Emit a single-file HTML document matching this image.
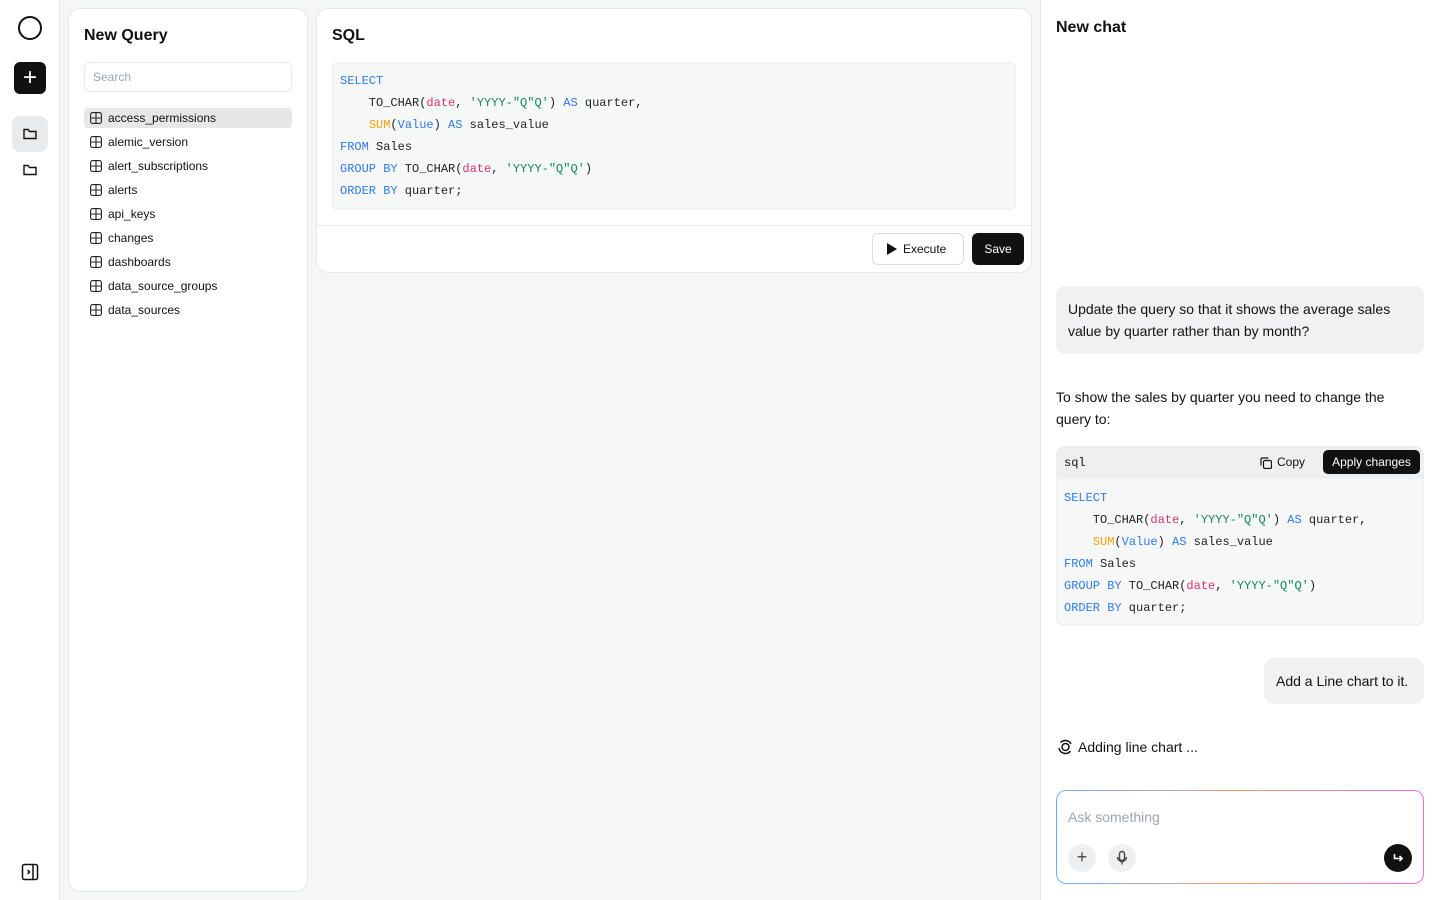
<!DOCTYPE html>
<html><head><style>
*{box-sizing:border-box;margin:0;padding:0}
body{width:1440px;height:900px;overflow:hidden;font-family:"Liberation Sans",sans-serif;background:#f5f6f6;position:relative;color:#111}
.abs{position:absolute}
.mono{font-family:"Liberation Mono",monospace;font-size:12px}
.k{color:#2f7ae5}.s{color:#16845b}.r{color:#d6336c}.o{color:#f59f0b}
.t{height:24px;position:relative;padding-left:18px}
.t svg{position:absolute;left:0;top:6px}
</style></head><body>
<div class="abs" style="left:0;top:0;width:60px;height:900px;background:#fff;border-right:1px solid #e5e7eb"></div>
<div class="abs" style="left:18px;top:16px;width:24px;height:24px;border:2px solid #111;border-radius:50%"></div>
<div class="abs" style="left:14px;top:62px;width:32px;height:32px;background:#111;border-radius:6px;color:#fff;font-size:24px;line-height:31px;text-align:center">+</div>
<div class="abs" style="left:12px;top:116px;width:36px;height:36px;background:#e9eaec;border-radius:8px"></div>
<svg class="abs" style="left:22px;top:126px" width="16" height="16" viewBox="0 0 16 16" fill="none" stroke="#111" stroke-width="1.4"><path d="M2 4v8.5h12V5.5H7.5L6 3.5H2z"/></svg>
<svg class="abs" style="left:22px;top:162px" width="16" height="16" viewBox="0 0 16 16" fill="none" stroke="#111" stroke-width="1.4"><path d="M2 4v8.5h12V5.5H7.5L6 3.5H2z"/></svg>
<svg class="abs" style="left:21px;top:863px" width="18" height="18" viewBox="0 0 18 18" fill="none" stroke="#111" stroke-width="1.5"><rect x="1.5" y="1.5" width="15" height="15" rx="2"/><path d="M12 2v14M6.5 7l2 2-2 2"/></svg>

<div class="abs" style="left:68px;top:8px;width:240px;height:884px;background:#fff;border:1px solid #e5e7eb;border-radius:12px"></div>
<div class="abs" style="left:84px;top:27px;font-size:16px;font-weight:bold">New Query</div>
<div class="abs" style="left:84px;top:62px;width:208px;height:30px;border:1px solid #e5e7eb;border-radius:6px;font-size:12px;color:#9ca3af;padding:7px 8px">Search</div>
<div class="abs" style="left:84px;top:108px;width:208px;height:20px;background:#e6e7e9;border-radius:4px"></div>
<div class="abs" style="left:90px;top:106px;font-size:12px;line-height:24px">
<div class="t"><svg width="12" height="12" viewBox="0 0 12 12" fill="none" stroke="#222" stroke-width="1.1"><rect x=".6" y=".6" width="10.8" height="10.8" rx="2"/><path d="M6 1v10M1 6h10"/></svg>access_permissions</div>
<div class="t"><svg width="12" height="12" viewBox="0 0 12 12" fill="none" stroke="#222" stroke-width="1.1"><rect x=".6" y=".6" width="10.8" height="10.8" rx="2"/><path d="M6 1v10M1 6h10"/></svg>alemic_version</div>
<div class="t"><svg width="12" height="12" viewBox="0 0 12 12" fill="none" stroke="#222" stroke-width="1.1"><rect x=".6" y=".6" width="10.8" height="10.8" rx="2"/><path d="M6 1v10M1 6h10"/></svg>alert_subscriptions</div>
<div class="t"><svg width="12" height="12" viewBox="0 0 12 12" fill="none" stroke="#222" stroke-width="1.1"><rect x=".6" y=".6" width="10.8" height="10.8" rx="2"/><path d="M6 1v10M1 6h10"/></svg>alerts</div>
<div class="t"><svg width="12" height="12" viewBox="0 0 12 12" fill="none" stroke="#222" stroke-width="1.1"><rect x=".6" y=".6" width="10.8" height="10.8" rx="2"/><path d="M6 1v10M1 6h10"/></svg>api_keys</div>
<div class="t"><svg width="12" height="12" viewBox="0 0 12 12" fill="none" stroke="#222" stroke-width="1.1"><rect x=".6" y=".6" width="10.8" height="10.8" rx="2"/><path d="M6 1v10M1 6h10"/></svg>changes</div>
<div class="t"><svg width="12" height="12" viewBox="0 0 12 12" fill="none" stroke="#222" stroke-width="1.1"><rect x=".6" y=".6" width="10.8" height="10.8" rx="2"/><path d="M6 1v10M1 6h10"/></svg>dashboards</div>
<div class="t"><svg width="12" height="12" viewBox="0 0 12 12" fill="none" stroke="#222" stroke-width="1.1"><rect x=".6" y=".6" width="10.8" height="10.8" rx="2"/><path d="M6 1v10M1 6h10"/></svg>data_source_groups</div>
<div class="t"><svg width="12" height="12" viewBox="0 0 12 12" fill="none" stroke="#222" stroke-width="1.1"><rect x=".6" y=".6" width="10.8" height="10.8" rx="2"/><path d="M6 1v10M1 6h10"/></svg>data_sources</div>
</div>

<div class="abs" style="left:316px;top:8px;width:716px;height:265px;background:#fff;border:1px solid #e5e7eb;border-radius:12px"></div>
<div class="abs" style="left:332px;top:27px;font-size:16px;font-weight:bold">SQL</div>
<div class="abs mono" style="left:332px;top:62px;width:684px;height:148px;background:#f6f7f7;border:1px solid #eceeef;border-radius:6px;padding:7px 7px;line-height:22px;color:#222">
<div class="k">SELECT</div>
<div>&nbsp;&nbsp;&nbsp;&nbsp;TO_CHAR(<span class="r">date</span>, <span class="s">'YYYY-"Q"Q'</span>) <span class="k">AS</span> quarter,</div>
<div>&nbsp;&nbsp;&nbsp;&nbsp;<span class="o">SUM</span>(<span class="k">Value</span>) <span class="k">AS</span> sales_value</div>
<div><span class="k">FROM</span> Sales</div>
<div><span class="k">GROUP BY</span> TO_CHAR(<span class="r">date</span>, <span class="s">'YYYY-"Q"Q'</span>)</div>
<div><span class="k">ORDER BY</span> quarter;</div>
</div>
<div class="abs" style="left:317px;top:225px;width:714px;height:1px;background:#e5e7eb"></div>
<div class="abs" style="left:872px;top:233px;width:92px;height:32px;border:1px solid #ddd;border-radius:6px;font-size:12px;line-height:30px;padding-left:14px"><svg style="vertical-align:-2px;margin-right:6px" width="10" height="12" viewBox="0 0 10 12"><path d="M0 0L10 6L0 12z" fill="#111"/></svg>Execute</div>
<div class="abs" style="left:972px;top:233px;width:52px;height:32px;background:#111;color:#fff;border-radius:6px;font-size:12px;line-height:32px;text-align:center">Save</div>

<div class="abs" style="left:1040px;top:0;width:400px;height:900px;background:#fff;border-left:1px solid #e5e7eb"></div>
<div class="abs" style="left:1056px;top:19px;font-size:16px;font-weight:bold">New chat</div>
<div class="abs" style="left:1056px;top:286px;width:368px;height:68px;background:#f0f1f2;border-radius:10px;padding:12px;font-size:14px;line-height:22px">Update the query so that it shows the average sales value by quarter rather than by month?</div>
<div class="abs" style="left:1056px;top:386px;width:345px;font-size:14px;line-height:22px">To show the sales by quarter you need to change the query to:</div>
<div class="abs" style="left:1056px;top:446px;width:368px;height:180px;background:#f6f7f7;border:1px solid #eceeef;border-radius:8px;overflow:hidden">
<div style="height:32px;background:#eeeff0;position:relative">
<span class="mono abs" style="left:7px;top:9px">sql</span>
<svg class="abs" style="left:203px;top:10px" width="12" height="12" viewBox="0 0 12 12" fill="none" stroke="#111" stroke-width="1.2"><rect x="3.5" y="3.5" width="8" height="8" rx="1.5"/><path d="M1 8.5V2a1 1 0 0 1 1-1h6.5"/></svg>
<span class="abs" style="left:220px;top:8px;font-size:12px">Copy</span>
<span class="abs" style="left:266px;top:3px;width:97px;height:24px;background:#111;color:#fff;border-radius:5px;font-size:12px;line-height:24px;text-align:center">Apply changes</span>
</div>
<div class="mono" style="padding:8px 7px;line-height:22px;color:#222">
<div class="k">SELECT</div>
<div>&nbsp;&nbsp;&nbsp;&nbsp;TO_CHAR(<span class="r">date</span>, <span class="s">'YYYY-"Q"Q'</span>) <span class="k">AS</span> quarter,</div>
<div>&nbsp;&nbsp;&nbsp;&nbsp;<span class="o">SUM</span>(<span class="k">Value</span>) <span class="k">AS</span> sales_value</div>
<div><span class="k">FROM</span> Sales</div>
<div><span class="k">GROUP BY</span> TO_CHAR(<span class="r">date</span>, <span class="s">'YYYY-"Q"Q'</span>)</div>
<div><span class="k">ORDER BY</span> quarter;</div>
</div></div>
<div class="abs" style="left:1264px;top:658px;width:160px;height:46px;background:#f0f1f2;border-radius:10px;padding:15px 12px;font-size:14px;white-space:nowrap">Add a Line chart to it.</div>
<svg class="abs" style="left:1057px;top:739px" width="16" height="16" viewBox="0 0 16 16" fill="none" stroke="#111" stroke-width="1.5"><circle cx="8.5" cy="8" r="3.5"/><path d="M3.5 3.5A6.5 6.5 0 0 1 14 5M13.5 12A6.5 6.5 0 0 1 2 9"/></svg>
<div class="abs" style="left:1078px;top:739px;font-size:14px">Adding line chart ...</div>
<div class="abs" style="left:1056px;top:790px;width:368px;height:94px;border-radius:10px;background:linear-gradient(90deg,#6aaeff,#f0a070,#ff66dd);padding:1px">
<div style="width:100%;height:100%;background:#fff;border-radius:9px;position:relative">
<span class="abs" style="left:11px;top:18px;font-size:14px;color:#9ca3af">Ask something</span>
<span class="abs" style="left:11px;top:53px;width:28px;height:28px;border-radius:50%;background:#eeeff0;text-align:center;line-height:27px;font-size:18px;color:#444">+</span>
<span class="abs" style="left:51px;top:53px;width:28px;height:28px;border-radius:50%;background:#eeeff0"><svg width="28" height="28" viewBox="0 0 28 28" fill="none" stroke="#444" stroke-width="1.4"><rect x="11.5" y="7.5" width="5" height="9" rx="2.5"/><path d="M9.5 13a4.5 4.5 0 0 0 9 0M14 17.5v3"/></svg></span>
<span class="abs" style="left:327px;top:53px;width:28px;height:28px;border-radius:50%;background:#111"><svg width="28" height="28" viewBox="0 0 28 28" fill="none" stroke="#fff" stroke-width="1.6"><path d="M10.5 10v4.5h7M15.5 12l2.5 2.5-2.5 2.5"/></svg></span>
</div></div>
</body></html>
